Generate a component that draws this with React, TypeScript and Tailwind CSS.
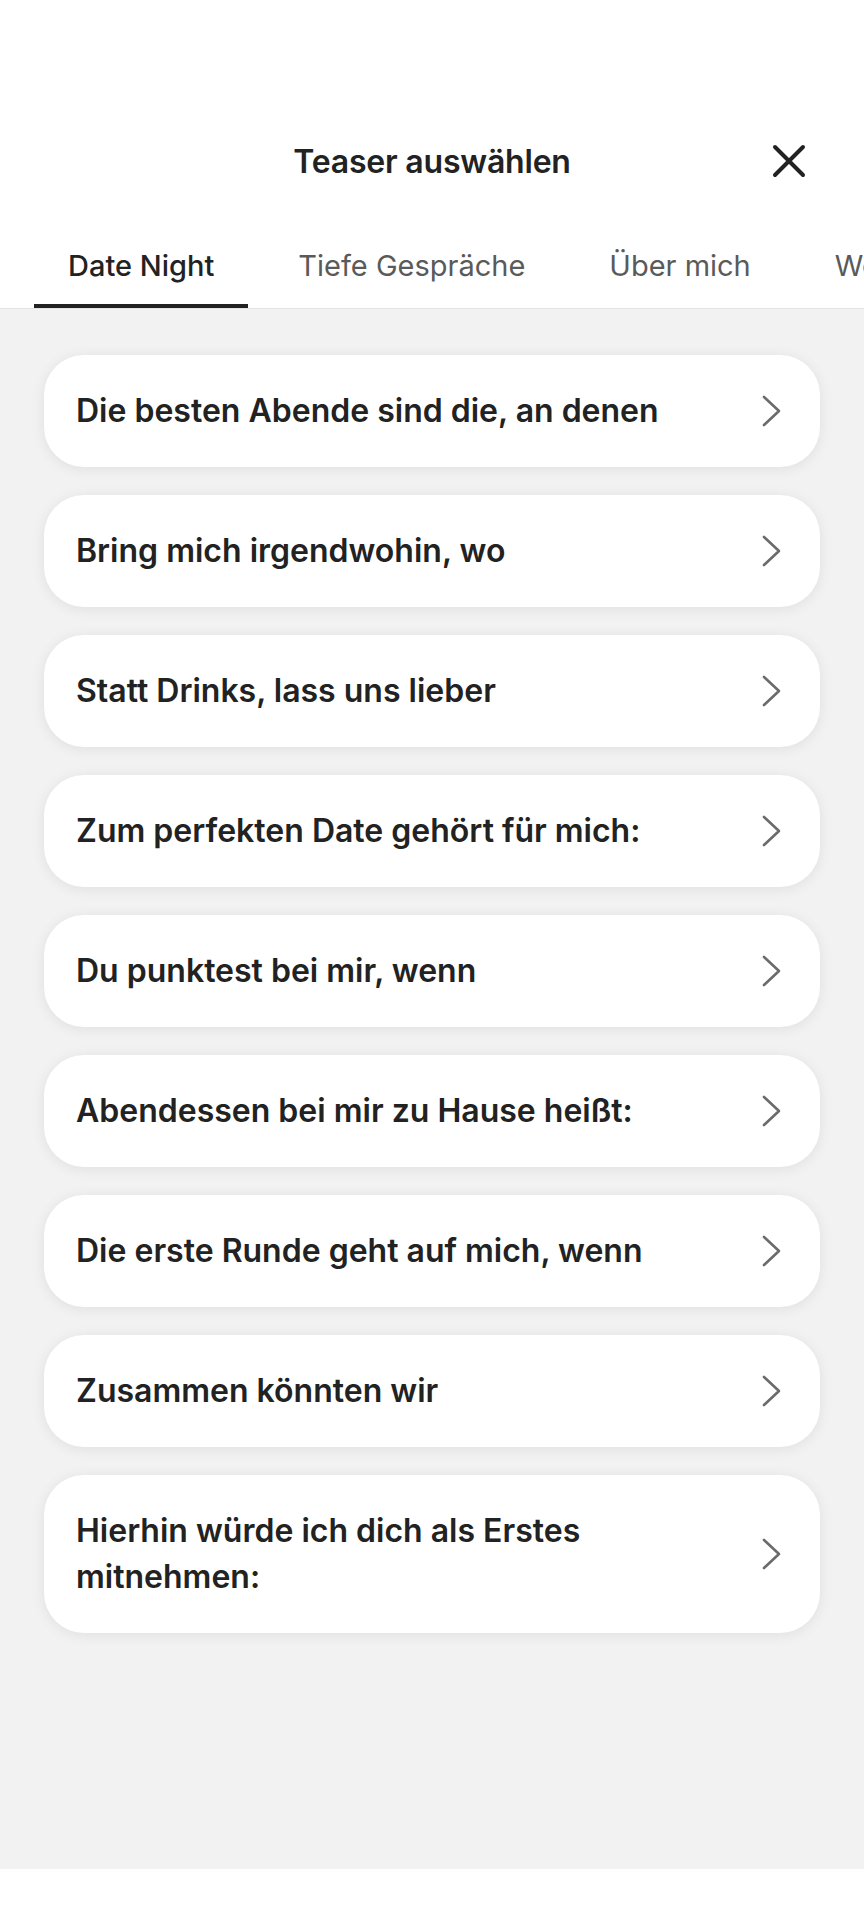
import React from 'react';

const teasers = [
  'Die besten Abende sind die, an denen',
  'Bring mich irgendwohin, wo',
  'Statt Drinks, lass uns lieber',
  'Zum perfekten Date gehört für mich:',
  'Du punktest bei mir, wenn',
  'Abendessen bei mir zu Hause heißt:',
  'Die erste Runde geht auf mich, wenn',
  'Zusammen könnten wir',
  'Hierhin würde ich dich als Erstes mitnehmen:',
];

const tabs = ['Date Night', 'Tiefe Gespräche', 'Über mich', 'Wochenende'];

function Chevron() {
  return (
    <svg width="20" height="32" viewBox="0 0 20 32" fill="none" className="shrink-0">
      <path d="M2 2 L17 16 L2 30" stroke="#6b6b6b" strokeWidth="2.6" strokeLinecap="round" strokeLinejoin="round" />
    </svg>
  );
}

export default function App() {
  return (
    <div className="w-full h-[1920px] flex flex-col bg-white font-['Inter',sans-serif] text-[#222]">
      {/* header */}
      <div className="relative pt-[142px] flex justify-center">
        <h1 className="text-[32px] leading-[40px] font-semibold tracking-[-0.2px]">Teaser auswählen</h1>
        <button className="absolute right-[58px] top-[144px] w-[34px] h-[34px] flex items-center justify-center">
          <svg width="34" height="34" viewBox="0 0 34 34" fill="none">
            <path d="M3 3 L31 31 M31 3 L3 31" stroke="#222" strokeWidth="4" strokeLinecap="round" />
          </svg>
        </button>
      </div>

      {/* tabs */}
      <div className="mt-[48px] border-b border-[#e4e4e4] overflow-hidden">
        <div className="flex gap-[16px] pl-[34px] whitespace-nowrap">
          {tabs.map((t, i) => (
            <div
              key={t}
              className={
                i === 0
                  ? 'px-[34px] pt-[19px] pb-[21px] border-b-4 border-[#222] text-[29px] leading-[34px] font-medium text-[#222]'
                  : 'px-[34px] pt-[19px] pb-[21px] border-b-4 border-transparent text-[29px] leading-[34px] text-[#5a5a5a]'
              }
            >
              {t}
            </div>
          ))}
        </div>
      </div>

      {/* list */}
      <div className="flex-1 bg-[#f2f2f2] px-[44px] pt-[46px] flex flex-col gap-[28px]">
        {teasers.map((t) => (
          <div
            key={t}
            className="bg-white rounded-[40px] shadow-[0_2px_14px_rgba(0,0,0,0.08)] pl-[32px] pr-[38px] py-[33px] flex items-center justify-between"
          >
            <span className="max-w-[630px] text-[32px] leading-[46px] font-semibold">{t}</span>
            <Chevron />
          </div>
        ))}
      </div>

      <div className="h-[51px] bg-white" />
    </div>
  );
}
